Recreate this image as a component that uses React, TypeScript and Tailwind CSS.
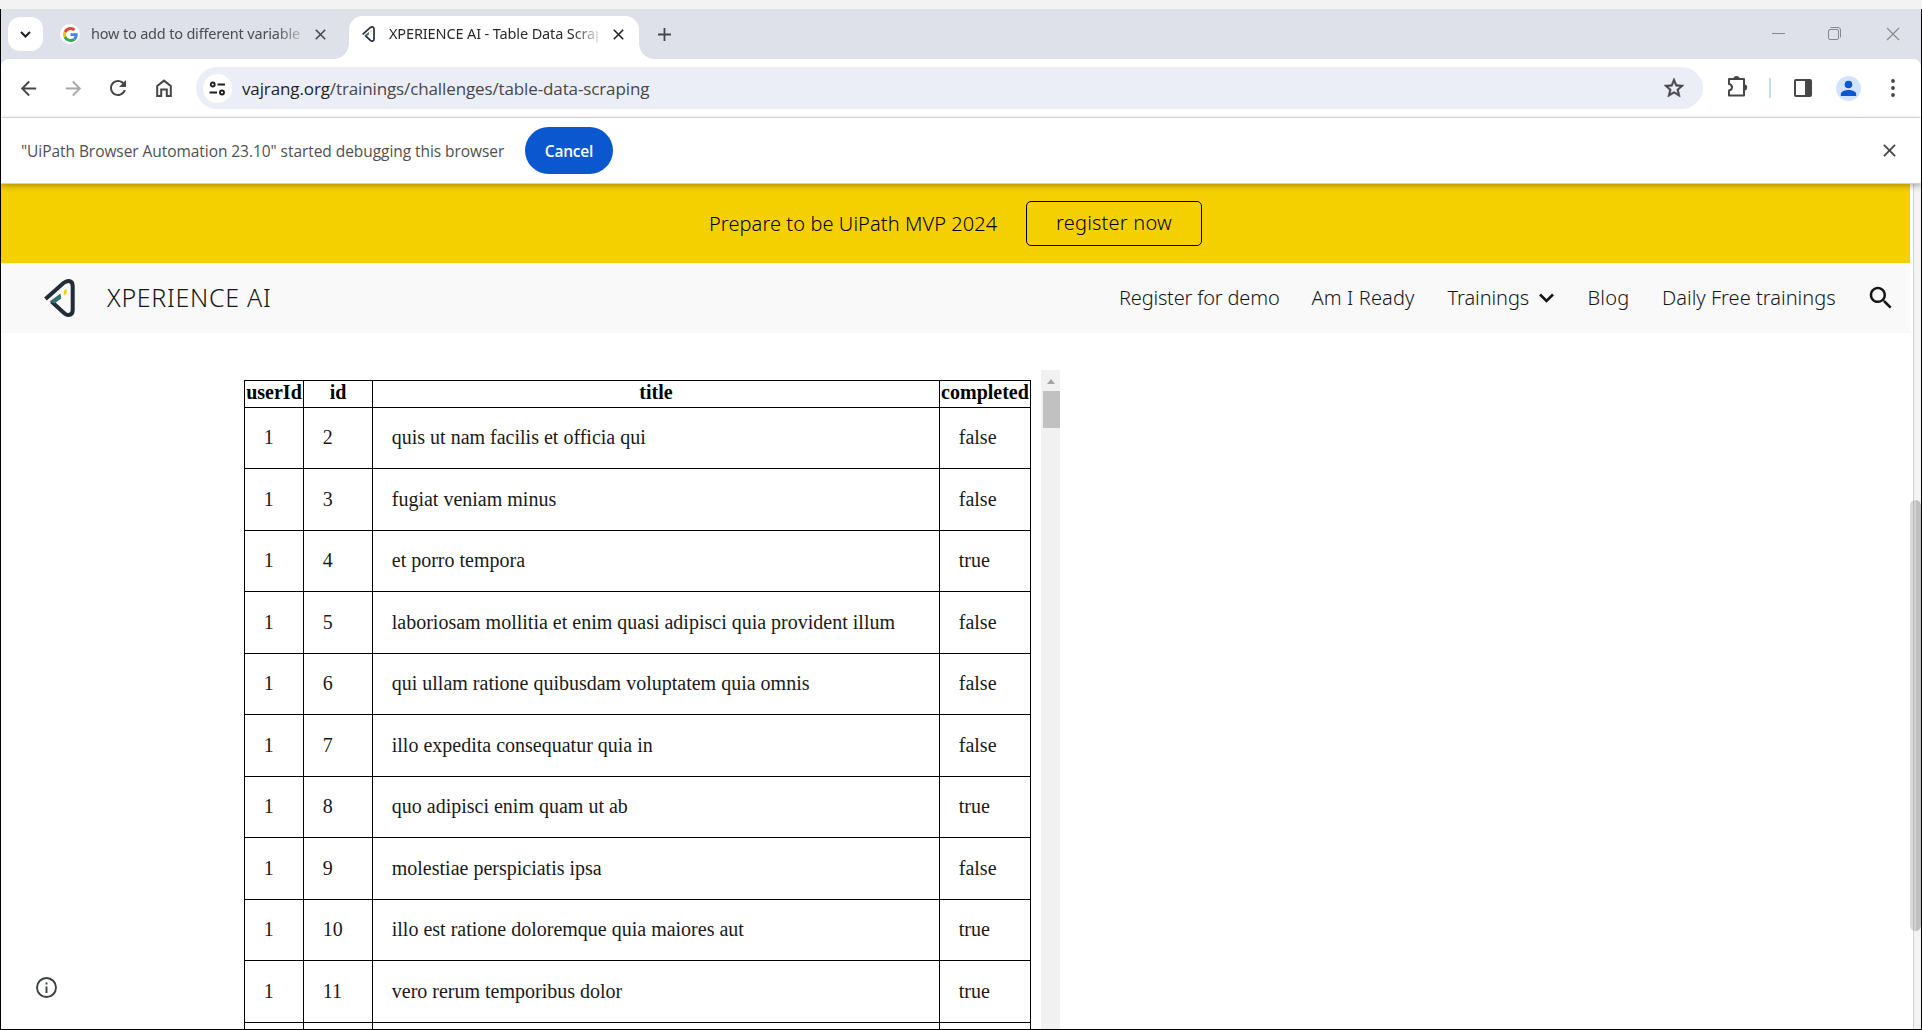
import type { ReactNode } from "react";

const rows: [number, number, string, boolean][] = [
  [1, 2, "quis ut nam facilis et officia qui", false],
  [1, 3, "fugiat veniam minus", false],
  [1, 4, "et porro tempora", true],
  [1, 5, "laboriosam mollitia et enim quasi adipisci quia provident illum", false],
  [1, 6, "qui ullam ratione quibusdam voluptatem quia omnis", false],
  [1, 7, "illo expedita consequatur quia in", false],
  [1, 8, "quo adipisci enim quam ut ab", true],
  [1, 9, "molestiae perspiciatis ipsa", false],
  [1, 10, "illo est ratione doloremque quia maiores aut", true],
  [1, 11, "vero rerum temporibus dolor", true],
];

function Icon({ className, d, viewBox = "0 0 24 24" }: { className: string; d: string; viewBox?: string }) {
  return (
    <svg className={`shrink-0 ${className}`} viewBox={viewBox} fill="currentColor">
      <path d={d} />
    </svg>
  );
}

function Cross({ className, width = 2 }: { className: string; width?: number }) {
  return (
    <svg className={`shrink-0 ${className}`} viewBox="0 0 14 14" fill="none" stroke="currentColor" strokeWidth={width}>
      <path d="M1 1L13 13M13 1L1 13" />
    </svg>
  );
}

function Logo({ className }: { className: string }) {
  return (
    <svg className={`shrink-0 ${className}`} viewBox="0 0 31 38" fill="none">
      <path d="M1.500 20L19.500 4Q22.500 1.800 25 2Q28.700 2.500 28.700 7V31Q28.700 35.500 25 36Q22.500 36.300 20 34L7.500 22.500" stroke="#232c38" strokeWidth="4" />
      <path d="M5.500 22.500L16.500 14.500L17.200 19.500L10.500 24.500Z" fill="#35706f" />
      <path d="M19.800 12L22.600 9.200V14L20.600 16.200H19.800Z" fill="#f5d000" />
    </svg>
  );
}

function GoogleG() {
  return (
    <svg className="size-[15px]" viewBox="0 0 48 48">
      <path fill="#EA4335" d="M24 9.500c3.540 0 6.710 1.220 9.210 3.600l6.850-6.850C35.900 2.380 30.470 0 24 0 14.620 0 6.510 5.380 2.560 13.220l7.980 6.190C12.430 13.720 17.740 9.500 24 9.500z" />
      <path fill="#4285F4" d="M46.980 24.550c0-1.570-.15-3.090-.38-4.550H24v9.020h12.940c-.58 2.960-2.260 5.480-4.780 7.180l7.730 6c4.510-4.180 7.090-10.360 7.090-17.650z" />
      <path fill="#FBBC05" d="M10.530 28.590c-.48-1.450-.76-2.990-.76-4.590s.27-3.140.76-4.590l-7.980-6.190C.92 16.460 0 20.120 0 24c0 3.880.92 7.540 2.560 10.780l7.970-6.190z" />
      <path fill="#34A853" d="M24 48c6.480 0 11.930-2.130 15.890-5.810l-7.730-6c-2.150 1.450-4.920 2.300-8.160 2.300-6.260 0-11.570-4.220-13.470-9.910l-7.980 6.190C6.510 42.620 14.620 48 24 48z" />
    </svg>
  );
}

function TabStrip() {
  return (
    <div className="flex h-[50px] shrink-0 bg-[#dee1e9]">
      <div className="mt-[8px] ml-[7px] flex h-[34px] w-[35px] items-center justify-center rounded-[12px] bg-white text-[#1f1f1f]">
        <svg className="size-[11px]" viewBox="0 0 11 11" fill="none" stroke="currentColor" strokeWidth="2">
          <path d="M1 3L5.500 7.500L10 3" />
        </svg>
      </div>
      <div className="ml-[17px] flex h-[50px] w-[289px] items-center">
        <div className="flex size-[20px] shrink-0 items-center justify-center rounded-full bg-white">
          <GoogleG />
        </div>
        <div className="ml-[11px] w-[209px] overflow-hidden whitespace-nowrap font-['Noto_Sans',sans-serif] text-[14.500px] tracking-[-0.180px] text-[#4a4d50] [mask-image:linear-gradient(to_right,black_88%,rgba(0,0,0,0.3))]">
          how to add to different variable
        </div>
        <Cross className="ml-[15px] size-[11px] text-[#454746]" />
      </div>
      <div className="relative mt-[7px] flex h-[43px] w-[290px] items-center rounded-t-[14px] bg-white pb-[7px]">
        <div className="absolute bottom-0 -left-[15px] size-[15px] bg-[radial-gradient(circle_at_0_0,transparent_14.5px,white_15px)]" />
        <div className="absolute -right-[15px] bottom-0 size-[15px] bg-[radial-gradient(circle_at_100%_0,transparent_14.5px,white_15px)]" />
        <Logo className="ml-[13px] h-[16px] w-[13px]" />
        <div className="ml-[14px] w-[209px] overflow-hidden whitespace-nowrap font-['Noto_Sans',sans-serif] text-[14.500px] tracking-[-0.130px] text-[#2a2a2a] [mask-image:linear-gradient(to_right,black_88%,rgba(0,0,0,0.15))]">
          XPERIENCE AI - Table Data Scrap
        </div>
        <Cross className="ml-[15px] size-[11px] text-[#1f1f1f]" />
      </div>
      <svg className="mt-[18.5px] ml-[19px] size-[13px] text-[#454746]" viewBox="0 0 13 13" stroke="currentColor" strokeWidth="1.800">
        <path d="M6.500 0V13M0 6.500H13" />
      </svg>
      <div className="mt-[18px] mr-[21px] ml-auto flex h-[13px] items-center gap-[43px] text-[#85888e]">
        <div className="h-px w-[13px] bg-current" />
        <svg className="size-[13px]" viewBox="0 0 13 13" fill="none" stroke="currentColor">
          <rect x=".5" y="2.500" width="10" height="10" rx="1.500" />
          <path d="M2.500 .5H10Q12.500 .5 12.500 3V10.500" />
        </svg>
        <Cross className="ml-[2px] size-[14px]" width={1.1} />
      </div>
    </div>
  );
}

function Toolbar() {
  return (
    <div className="h-[59px] shrink-0 bg-[#dee1e9]">
      <div className="flex h-[59px] items-center rounded-t-[8px] border-b border-[#dcdfe3] bg-white text-[#474747]">
        <Icon className="ml-[16px] size-[23px]" d="M20 11H7.830l5.590-5.590L12 4l-8 8 8 8 1.410-1.410L7.830 13H20v-2z" />
        <Icon className="ml-[22px] size-[23px] text-[#a9a9a9]" d="M12 4l-1.410 1.410L16.170 11H4v2h12.170l-5.580 5.590L12 20l8-8z" />
        <Icon
          className="ml-[21px] size-[24px]"
          d="M17.650 6.350C16.200 4.900 14.210 4 12 4c-4.420 0-7.990 3.580-7.990 8s3.570 8 7.990 8c3.730 0 6.840-2.550 7.730-6h-2.080c-.82 2.330-3.040 4-5.650 4-3.310 0-6-2.690-6-6s2.690-6 6-6c1.660 0 3.140.69 4.220 1.780L13 11h7V4l-2.350 2.350z"
        />
        <svg className="ml-[26px] h-[18px] w-[16px]" viewBox="0 0 16 18" fill="none" stroke="currentColor" strokeWidth="2">
          <path d="M1.200 17V7L8 1.600L14.800 7V17H10.800V10.500H5.200V17Z" />
        </svg>
        <div className="ml-[24px] flex h-[42px] w-[1507px] shrink-0 items-center rounded-full bg-[#ebeef7] pr-[17px] pl-[7px]">
          <div className="flex size-[29px] shrink-0 items-center justify-center rounded-full bg-white text-[#1f1f1f]">
            <svg className="h-[15px] w-[17px]" viewBox="0 0 17 15" fill="none" stroke="currentColor" strokeWidth="1.900">
              <circle cx="3.700" cy="3.500" r="2" />
              <path d="M8.500 3.500H16M.5 11.500H8" />
              <circle cx="13" cy="11.500" r="2" />
            </svg>
          </div>
          <div className="mt-px ml-[10px] whitespace-nowrap font-['Open_Sans',sans-serif] text-[17px] tracking-[-0.120px] text-[#474747]">
            <span className="text-[#1f1f1f]">vajrang.org</span>/trainings/challenges/table-data-scraping
          </div>
          <Icon
            className="ml-auto size-[24px] stroke-current stroke-[0.5]"
            d="M22 9.240l-7.190-.62L12 2 9.190 8.630 2 9.240l5.460 4.730L5.820 21 12 17.270 18.180 21l-1.630-7.030L22 9.240zM12 15.400l-3.760 2.270 1-4.280-3.320-2.880 4.380-.38L12 6.100l1.710 4.040 4.380.38-3.320 2.880 1 4.280L12 15.400z"
          />
        </div>
        <svg className="mb-[3px] ml-[24px] h-[21px] w-[21px]" viewBox="0 0 21 21" fill="currentColor">
          <path d="M2 3H17V19.500H2V14.500Q5 13.800 5 11.200Q5 8.600 2 8Z" fill="none" stroke="currentColor" strokeWidth="2" strokeLinejoin="round" />
          <path d="M6.500 2.500A3 2.500 0 0 1 12.500 2.500ZM17.500 8.500A2.700 3 0 0 1 17.500 14.500Z" />
        </svg>
        <div className="ml-[21px] h-[20px] w-[2px] bg-[#c8dafc]" />
        <svg className="ml-[23px] size-[18px]" viewBox="0 0 18 18">
          <rect x="1" y="1" width="16" height="16" rx="1" fill="none" stroke="currentColor" strokeWidth="2" />
          <path d="M11 1H17V17H11Z" fill="currentColor" />
        </svg>
        <div className="ml-[24px] flex size-[25px] shrink-0 items-center justify-center rounded-full bg-[#d3e3fd] text-[#0b57d0]">
          <svg className="size-[17px]" viewBox="0 0 17 17" fill="currentColor">
            <circle cx="8.500" cy="4.500" r="3.800" />
            <path d="M.8 16V14C.8 11.200 5.500 10 8.500 10S16.200 11.200 16.200 14V16Z" />
          </svg>
        </div>
        <svg className="ml-[30px] h-[18px] w-[4px]" viewBox="0 0 4 18" fill="currentColor">
          <circle cx="2" cy="2" r="1.900" />
          <circle cx="2" cy="9" r="1.900" />
          <circle cx="2" cy="16" r="1.900" />
        </svg>
      </div>
    </div>
  );
}

function InfoBar() {
  return (
    <div className="relative z-10 flex h-[66px] shrink-0 items-center border-b border-[#d2d2cd] bg-white shadow-[0_2px_6px_rgba(0,0,0,0.3)]">
      <span className="mt-[2px] ml-[20px] w-[504px] whitespace-nowrap font-['Open_Sans',sans-serif] text-[15.500px] tracking-[-0.060px] text-[#505050]">
        "UiPath Browser Automation 23.10" started debugging this browser
      </span>
      <button className="h-[47px] w-[88px] rounded-full bg-[#0b57d0] pt-[2px] font-['Open_Sans',sans-serif] text-[15.500px] font-semibold tracking-[-0.200px] text-white">
        Cancel
      </button>
      <Cross className="mr-[25.5px] ml-auto size-[13px] text-[#474747]" />
    </div>
  );
}

function NavItem({ width, children }: { width: string; children: ReactNode }) {
  return <span className={`shrink-0 whitespace-nowrap ${width}`}>{children}</span>;
}

function SiteHeader() {
  return (
    <>
      <div className="flex h-[79px] shrink-0 items-center bg-[#f5d000] pl-[708px] font-['Noto_Sans',sans-serif] text-[20px] font-light text-black">
        <span className="w-[317px] whitespace-nowrap tracking-[0.080px]">Prepare to be UiPath MVP 2024</span>
        <span className="flex h-[45px] w-[176px] items-center justify-center rounded-[5px] border border-black pb-[2px] tracking-[0.200px]">
          register now
        </span>
      </div>
      <div className="flex h-[70px] shrink-0 items-center bg-[#f9f9f9] font-['Noto_Sans',sans-serif] text-[20px] font-light text-[#161616]">
        <Logo className="ml-[43px] h-[38px] w-[31px]" />
        <span className="ml-[32px] pb-px whitespace-nowrap text-[25px] tracking-[0.700px]">XPERIENCE AI</span>
        <nav className="ml-auto flex items-center pr-[14px]">
          <NavItem width="w-[192.5px] tracking-[-0.190px]">Register for demo</NavItem>
          <NavItem width="w-[136px] tracking-[0.120px]">Am I Ready</NavItem>
          <NavItem width="w-[91px] tracking-[-0.080px]">Trainings</NavItem>
          <svg className="mr-[34px] h-[10px] w-[15px]" viewBox="0 0 15 10" fill="none" stroke="currentColor" strokeWidth="2.600">
            <path d="M1 1.500L7.500 8L14 1.500" />
          </svg>
          <NavItem width="w-[74.5px] tracking-[0.200px]">Blog</NavItem>
          <NavItem width="w-[204px] tracking-[0.020px]">Daily Free trainings</NavItem>
          <Icon
            className="size-[30px]"
            d="M15.500 14h-.79l-.28-.27C15.410 12.590 16 11.110 16 9.500 16 5.910 13.090 3 9.500 3S3 5.910 3 9.500 5.910 16 9.500 16c1.610 0 3.090-.59 4.230-1.570l.27.28v.79l5 4.990L20.490 19l-4.990-5zm-6 0C7.010 14 5 11.990 5 9.500S7.010 5 9.500 5 14 7.010 14 9.500 11.990 14 9.500 14z"
          />
        </nav>
      </div>
    </>
  );
}

const grid = "grid grid-cols-[59px_69px_567px_91px]";
const head = "flex items-center justify-center border-r border-black pb-[4px] leading-[22px]";
const cell = "flex items-center border-r border-black pl-[18.750px] pb-[2px]";

function DataTable() {
  return (
    <div className="mt-[10px] w-[787px] border-t border-l border-black font-['Liberation_Serif',serif] text-[20px] text-[#1a1a1a]">
      <div className={`${grid} h-[26.900px] border-b border-black font-bold text-black`}>
        <div className={head}>userId</div>
        <div className={head}>id</div>
        <div className={head}>title</div>
        <div className={head}>completed</div>
      </div>
      {rows.map(([user, id, title, done]) => (
        <div key={id} className={`${grid} h-[61.500px] border-b border-black`}>
          <div className={cell}>{user}</div>
          <div className={cell}>{id}</div>
          <div className={cell}>{title}</div>
          <div className={cell}>{String(done)}</div>
        </div>
      ))}
      <div className={`${grid} h-[61.500px]`}>
        <div className={cell} />
        <div className={cell} />
        <div className={cell} />
        <div className={cell} />
      </div>
    </div>
  );
}

export default function App() {
  return (
    <div className="flex h-[1030px] w-[1922px] flex-col overflow-hidden bg-[#f3f3f3] pt-[9px]">
      <div className="flex min-h-0 grow flex-col border-x border-b border-black bg-white">
        <TabStrip />
        <Toolbar />
        <InfoBar />
        <div className="relative flex min-h-0 grow">
          <div className="flex w-[1909px] shrink-0 flex-col">
            <SiteHeader />
            <div className="flex min-h-0 grow overflow-hidden pt-[37px] pl-[243px]">
              <DataTable />
              <div className="ml-[10px] w-[19px] bg-[#f1f1f1] pt-[9px]">
                <div className="ml-[6px] h-0 w-0 border-x-[4.500px] border-b-[5px] border-x-transparent border-b-[#a3a3a3]" />
                <div className="mt-[7px] ml-[2px] h-[37px] bg-[#c1c1c1]" />
              </div>
            </div>
          </div>
          <div className="ml-[3px] grow border-l border-[#d4d4d4] bg-[#f3f3f3]" />
          <div className="absolute top-[316px] right-0 h-[431px] w-[11px] overflow-hidden rounded-full bg-[#808080]/30">
            <div className="ml-auto h-full w-[5px] bg-[#808080]/20" />
          </div>
          <svg className="absolute bottom-[31px] left-[35px] size-[21px] text-[#3c4043]" viewBox="0 0 21 21" fill="none" stroke="currentColor" strokeWidth="1.900">
            <circle cx="10.500" cy="10.500" r="9.500" />
            <path d="M10.500 9.500V16M10.500 5.500V7.500" />
          </svg>
        </div>
      </div>
    </div>
  );
}
